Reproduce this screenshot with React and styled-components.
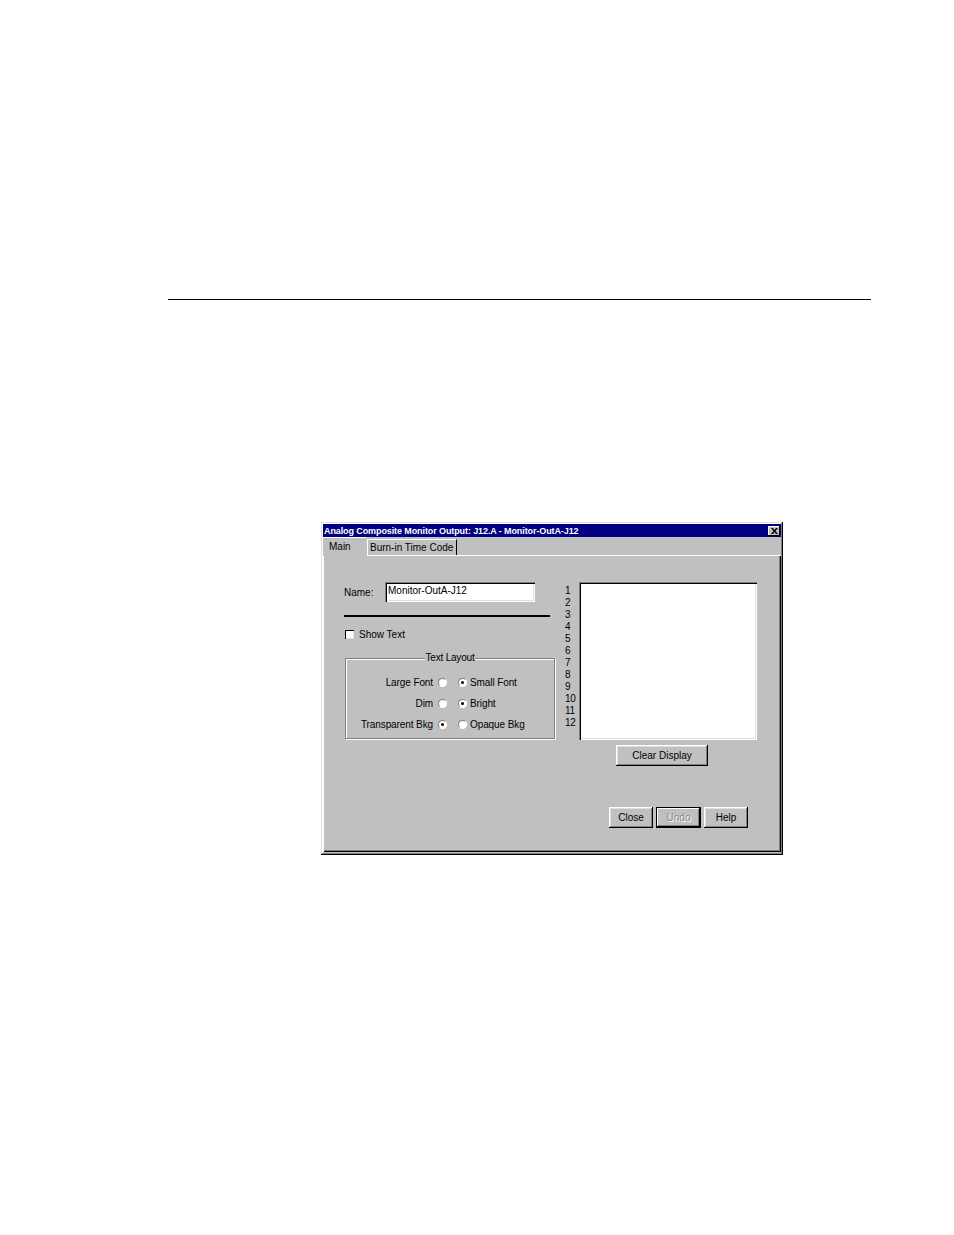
import React from "react";
import styled, { createGlobalStyle } from "styled-components";

const GlobalStyle = createGlobalStyle`
  body {
    margin: 0;
    background: #ffffff;
    font-family: "Liberation Sans", Arial, sans-serif;
  }
`;

const lineNumbers = [1, 2, 3, 4, 5, 6, 7, 8, 9, 10, 11, 12];

const layoutRows = [
  { left: "Large Font", right: "Small Font", checked: "right" },
  { left: "Dim", right: "Bright", checked: "right" },
  { left: "Transparent Bkg", right: "Opaque Bkg", checked: "left" },
];

const App = () => {
  return (
    <Page>
      <GlobalStyle />
      <Rule />
      <Window>
        <TitleBar>
          <TitleText>Analog Composite Monitor Output: J12.A - Monitor-OutA-J12</TitleText>
          <CloseBox>
            <svg width="7" height="6" viewBox="0 0 7 6">
              <path d="M0 0h2l1.5 2L5 0h2L4.5 3 7 6H5L3.5 4 2 6H0l2.5-3z" fill="#000" />
            </svg>
          </CloseBox>
        </TitleBar>

        <TabRow>
          <Tab $active>Main</Tab>
          <Tab>Burn-in Time Code</Tab>
        </TabRow>

        <Panel>
          <Content>
            <LeftCol>
              <NameRow>
                <NameLabel>Name:</NameLabel>
                <TextField>Monitor-OutA-J12</TextField>
              </NameRow>
              <Divider />
              <CheckRow>
                <CheckBox />
                <span>Show Text</span>
              </CheckRow>
              <GroupBox>
                <Legend>Text Layout</Legend>
                <OptionGrid>
                  {layoutRows.map((row) => (
                    <React.Fragment key={row.left}>
                      <OptionLabel $align="right">{row.left}</OptionLabel>
                      <Radio $checked={row.checked === "left"} />
                      <Radio $checked={row.checked === "right"} />
                      <OptionLabel>{row.right}</OptionLabel>
                    </React.Fragment>
                  ))}
                </OptionGrid>
              </GroupBox>
            </LeftCol>

            <NumberCol>
              {lineNumbers.map((n) => (
                <div key={n}>{n}</div>
              ))}
            </NumberCol>

            <ListCol>
              <ListBox />
              <Button $width={92} $offset={37}>Clear Display</Button>
            </ListCol>
          </Content>

          <Footer>
            <Button $width={44}>Close</Button>
            <Button $width={45} $default $disabled>Undo</Button>
            <Button $width={44}>Help</Button>
          </Footer>
        </Panel>
      </Window>
    </Page>
  );
};

export default App;

const Page = styled.div`
  width: 954px;
  min-height: 1235px;
  background: #ffffff;
  overflow: hidden;
`;

const Rule = styled.div`
  margin: 299px 0 0 168px;
  width: 703px;
  height: 1px;
  background: #000;
`;

const Window = styled.div`
  margin: 222px 0 0 321px;
  width: 462px;
  height: 333px;
  box-sizing: border-box;
  padding: 2px;
  background: #c0c0c0;
  box-shadow: inset -1px -1px #000, inset 1px 1px #dfdfdf,
    inset -2px -2px #808080, inset 2px 2px #fff;
  display: flex;
  flex-direction: column;
`;

const TitleBar = styled.div`
  height: 13px;
  background: #000080;
  display: flex;
  align-items: center;
  justify-content: space-between;
  padding: 0 1px 0 1px;
`;

const TitleText = styled.span`
  color: #fff;
  font-size: 9px;
  font-weight: bold;
  letter-spacing: -0.1px;
  white-space: nowrap;
`;

const CloseBox = styled.div`
  width: 12px;
  height: 10px;
  box-sizing: border-box;
  background: #c0c0c0;
  box-shadow: inset -1px -1px #000, inset 1px 1px #fff;
  display: flex;
  align-items: center;
  justify-content: center;
`;

const TabRow = styled.div`
  margin-top: 1px;
  height: 18px;
  display: flex;
  align-items: flex-end;
  position: relative;
  z-index: 1;
  margin-bottom: -1px;
`;

const Tab = styled.div`
  width: ${(p) => (p.$active ? "45px" : "auto")};
  height: ${(p) => (p.$active ? "19px" : "16px")};
  box-sizing: border-box;
  padding: ${(p) => (p.$active ? "2px 0 0 6px" : "1px 3px 0 2px")};
  margin-left: ${(p) => (p.$active ? "-1px" : "0")};
  margin-bottom: ${(p) => (p.$active ? "0" : "1px")};
  background: #c0c0c0;
  border-top: 1px solid #fff;
  border-left: 1px solid #fff;
  border-right: 1px solid ${(p) => (p.$active ? "#c0c0c0" : "#000")};
  font-size: 10px;
  line-height: 13px;
  color: #000;
  white-space: nowrap;
`;

const Panel = styled.div`
  height: 297px;
  box-sizing: border-box;
  padding: 26px 22px 24px 20px;
  background: #c0c0c0;
  border-top: 1px solid #fff;
  border-left: 1px solid #fff;
  box-shadow: inset -1px -1px #000, inset -2px -2px #808080;
  display: flex;
  flex-direction: column;
`;

const Content = styled.div`
  display: flex;
  align-items: flex-start;
`;

const LeftCol = styled.div`
  flex-shrink: 0;
  width: 211px;
  display: flex;
  flex-direction: column;
`;

const NameRow = styled.div`
  display: flex;
  align-items: center;
  height: 20px;
`;

const NameLabel = styled.span`
  width: 41px;
  font-size: 10px;
  color: #000;
`;

const sunken = `
  box-shadow: inset 1px 1px #808080, inset 2px 2px #000,
    inset -1px -1px #fff, inset -2px -2px #dfdfdf;
`;

const TextField = styled.div`
  width: 150px;
  height: 20px;
  box-sizing: border-box;
  padding: 3px 0 0 3px;
  background: #fff;
  ${sunken}
  font-size: 10px;
  line-height: 12px;
  color: #000;
`;

const Divider = styled.div`
  margin-top: 13px;
  width: 206px;
  height: 2px;
  background: #000;
`;

const CheckRow = styled.div`
  margin-top: 12px;
  display: flex;
  align-items: center;
  gap: 5px;
  font-size: 10px;
  color: #000;
  height: 11px;
`;

const CheckBox = styled.div`
  margin-left: 1px;
  width: 9px;
  height: 9px;
  box-sizing: border-box;
  background: #fff;
  box-shadow: inset 1px 1px #000, inset -1px -1px #dfdfdf;
`;

const GroupBox = styled.fieldset`
  margin: 12px 0 0 1px;
  padding: 8px 0 7px 0;
  width: 210px;
  box-sizing: border-box;
  height: 87px;
  border: 1px solid #808080;
  box-shadow: 1px 1px 0 #fff, inset 1px 1px 0 #fff;
`;

const Legend = styled.legend`
  margin: 0 auto;
  padding: 0 1px;
  font-size: 10px;
  line-height: 12px;
  color: #000;
  background: #c0c0c0;
  letter-spacing: -0.2px;
`;

const OptionGrid = styled.div`
  display: grid;
  grid-template-columns: 87px 9px 9px auto;
  column-gap: 5px;
  grid-auto-rows: 21px;
  align-items: center;
  & > :nth-child(4n + 3) {
    margin-left: 6px;
  }
  & > :nth-child(4n) {
    margin-left: 4px;
  }
`;

const OptionLabel = styled.span`
  text-align: ${(p) => p.$align || "left"};
  font-size: 10px;
  color: #000;
  white-space: nowrap;
  letter-spacing: -0.1px;
`;

const Radio = styled.span`
  position: relative;
  width: 9px;
  height: 9px;
  box-sizing: border-box;
  border-radius: 50%;
  background: #fff;
  border: 1px solid;
  border-color: #808080 #fff #fff #808080;
  &::after {
    content: "";
    display: ${(p) => (p.$checked ? "block" : "none")};
    position: absolute;
    left: 2px;
    top: 2px;
    width: 3px;
    height: 3px;
    border-radius: 50%;
    background: #000;
  }
`;

const NumberCol = styled.div`
  flex-shrink: 0;
  margin-left: 10px;
  width: 14px;
  padding-top: 3px;
  font-size: 10px;
  line-height: 12px;
  letter-spacing: -0.4px;
  color: #000;
`;

const ListCol = styled.div`
  flex-shrink: 0;
  display: flex;
  flex-direction: column;
  align-items: flex-start;
  gap: 5px;
`;

const ListBox = styled.div`
  width: 178px;
  height: 158px;
  background: #fff;
  ${sunken}
`;

const Button = styled.div`
  width: ${(p) => p.$width}px;
  height: 21px;
  margin-left: ${(p) => p.$offset || 0}px;
  box-sizing: border-box;
  background: #c0c0c0;
  box-shadow: ${(p) =>
    p.$default
      ? "inset -1px -1px #000, inset 1px 1px #000, inset -2px -2px #000, inset 2px 2px #fff, inset -3px -3px #808080"
      : "inset -1px -1px #000, inset 1px 1px #fff, inset -2px -2px #808080, inset 2px 2px #dfdfdf"};
  display: flex;
  align-items: center;
  justify-content: center;
  font-size: 10px;
  color: ${(p) => (p.$disabled ? "#8a8a8a" : "#000")};
  text-shadow: ${(p) => (p.$disabled ? "1px 1px 0 #fff" : "none")};
  white-space: nowrap;
`;

const Footer = styled.div`
  margin-top: auto;
  margin-right: 11px;
  display: flex;
  justify-content: flex-end;
  gap: 3px;
`;
